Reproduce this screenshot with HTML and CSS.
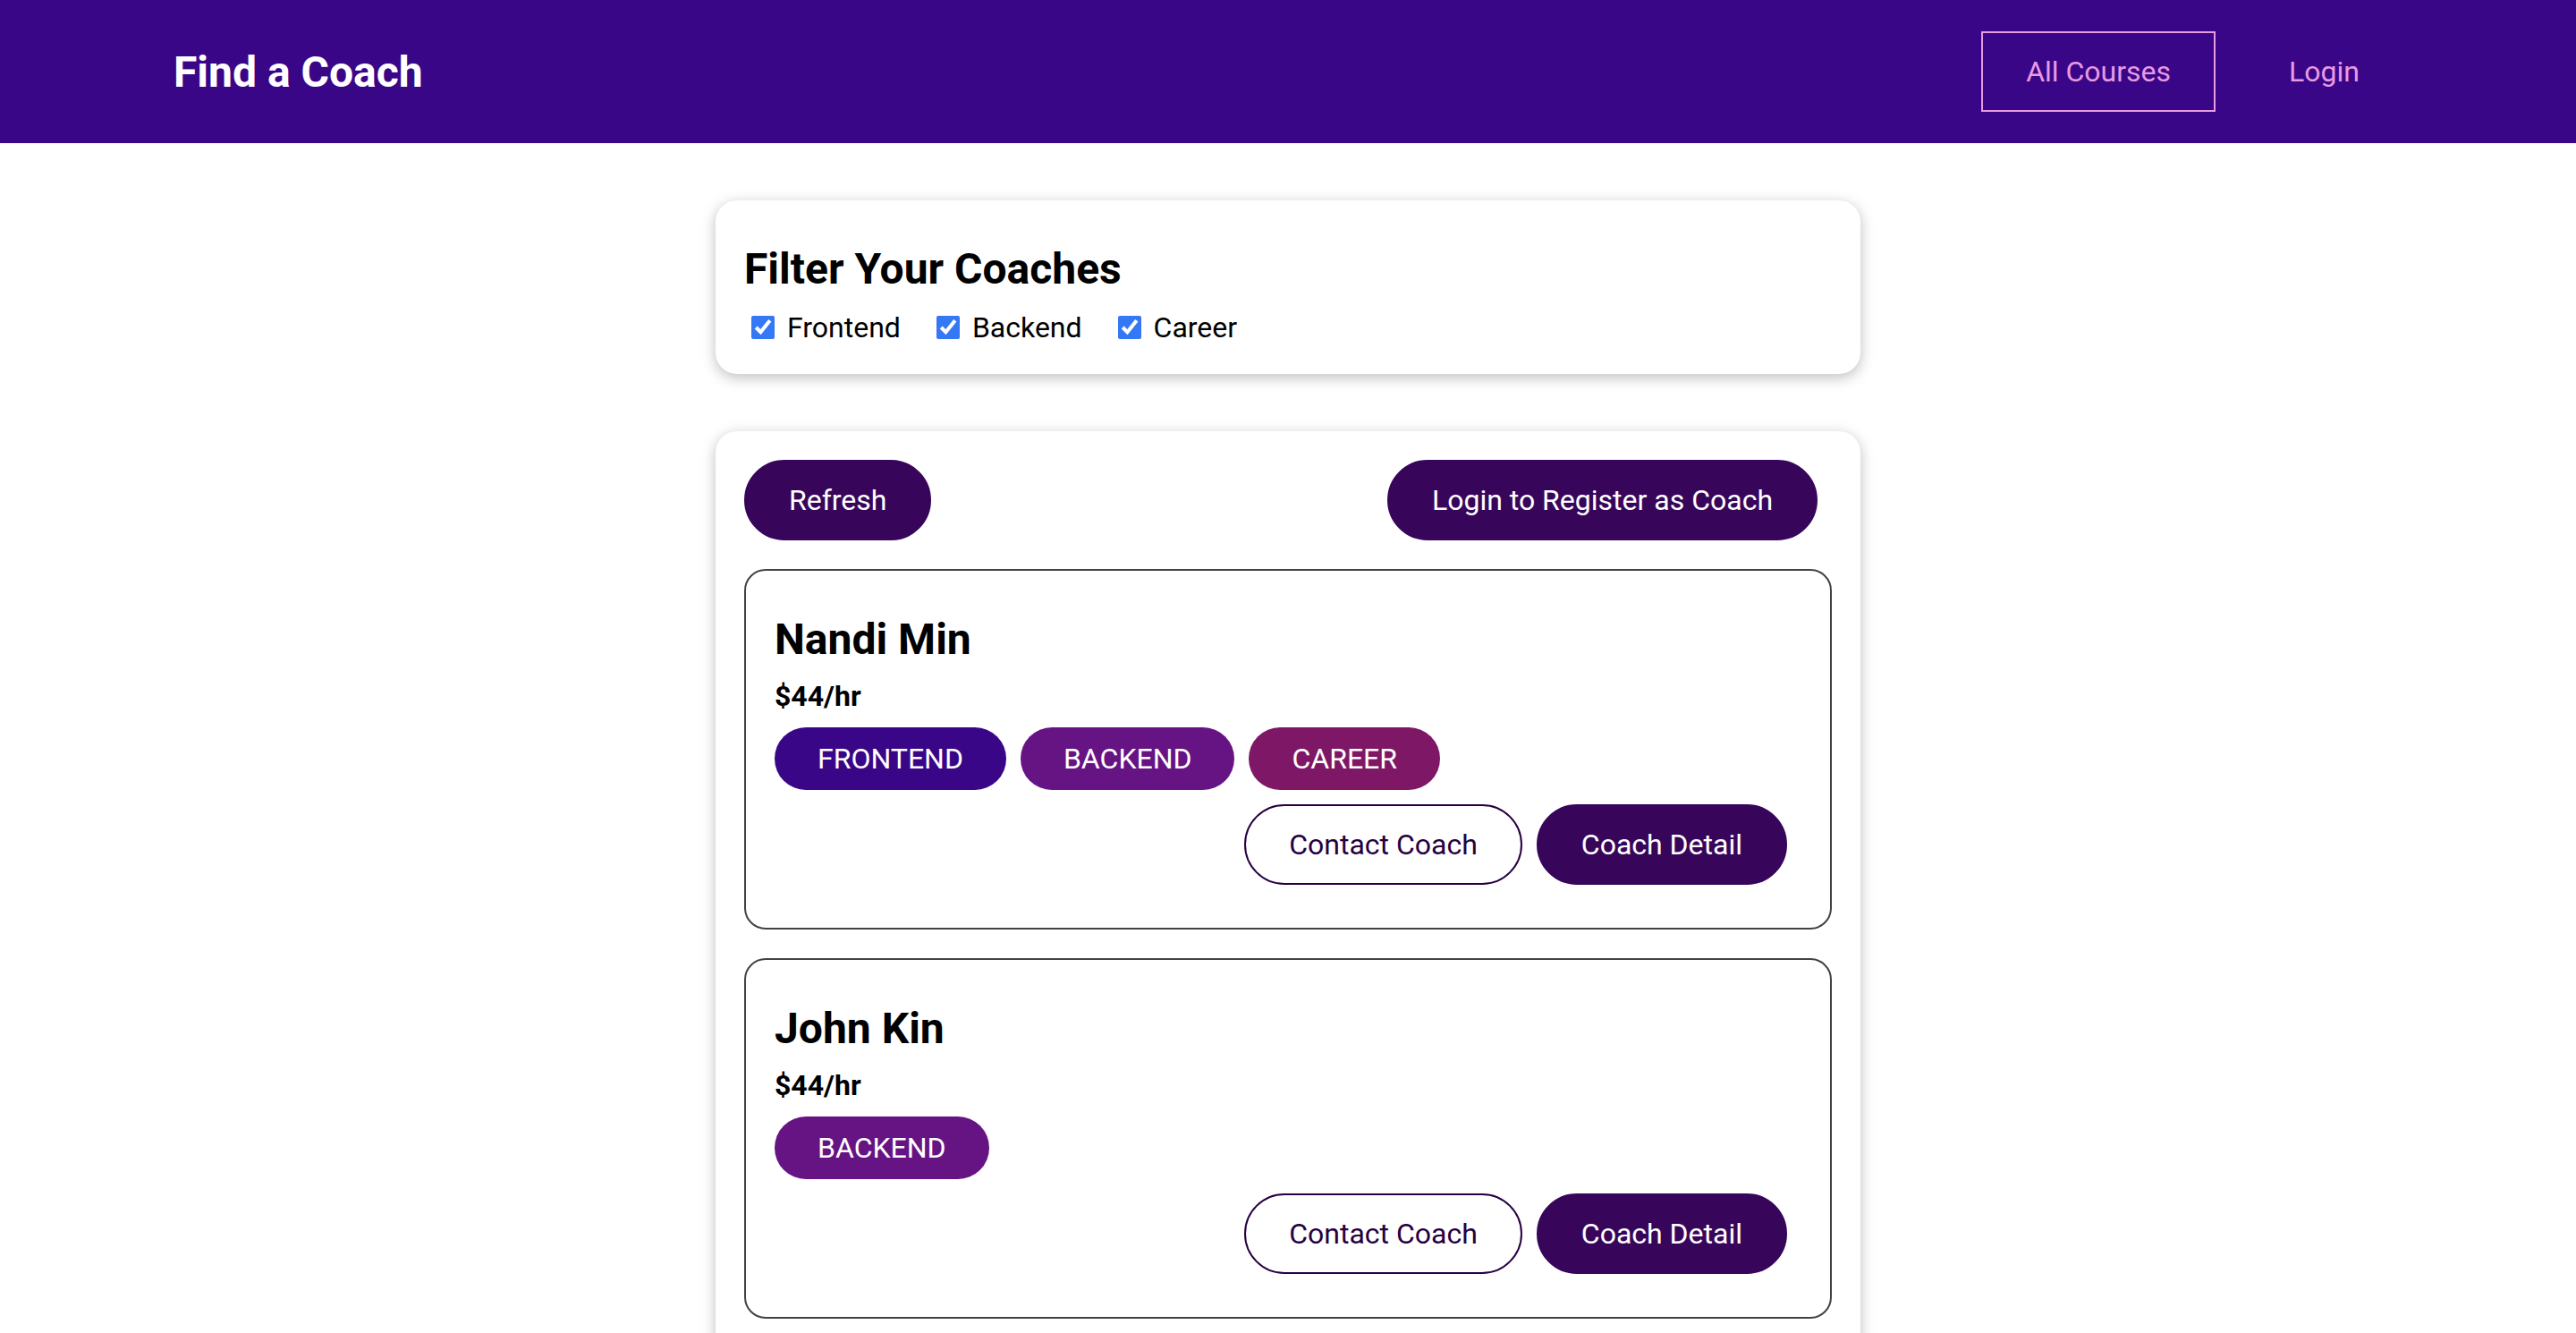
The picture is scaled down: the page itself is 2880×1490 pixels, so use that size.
FILE: index.html
```html
<!DOCTYPE html>
<html lang="en">
<head>
<meta charset="utf-8">
<title>Find a Coach</title>
<link rel="stylesheet" href="styles.css">
</head>
<body>
<header class="site-header">
  <nav class="nav">
    <h1 class="brand"><a href="#">Find a Coach</a></h1>
    <ul class="nav-links">
      <li><a href="#" class="nav-link active">All Courses</a></li>
      <li><a href="#" class="nav-link">Login</a></li>
    </ul>
  </nav>
</header>
<main>
  <section class="card">
    <h2 class="filter-title">Filter Your Coaches</h2>
    <div class="filter-row">
      <span class="filter-option"><input type="checkbox" id="frontend" checked><label for="frontend">Frontend</label></span>
      <span class="filter-option"><input type="checkbox" id="backend" checked><label for="backend">Backend</label></span>
      <span class="filter-option"><input type="checkbox" id="career" checked><label for="career">Career</label></span>
    </div>
  </section>
  <section class="card">
    <div class="controls">
      <button class="btn" type="button">Refresh</button>
      <a href="#" class="btn btn-register">Login to Register as Coach</a>
    </div>
    <ul class="coach-list">
      <li class="coach">
        <h3 class="coach-name">Nandi Min</h3>
        <h4 class="coach-rate">$44/hr</h4>
        <div class="badges">
          <span class="badge badge-frontend">FRONTEND</span>
          <span class="badge badge-backend">BACKEND</span>
          <span class="badge badge-career">CAREER</span>
        </div>
        <div class="actions">
          <a href="#" class="btn btn-outline">Contact Coach</a>
          <a href="#" class="btn">Coach Detail</a>
        </div>
      </li>
      <li class="coach">
        <h3 class="coach-name">John Kin</h3>
        <h4 class="coach-rate">$44/hr</h4>
        <div class="badges">
          <span class="badge badge-backend">BACKEND</span>
        </div>
        <div class="actions">
          <a href="#" class="btn btn-outline">Contact Coach</a>
          <a href="#" class="btn">Coach Detail</a>
        </div>
      </li>
    </ul>
  </section>
</main>
</body>
</html>
```

FILE: styles.css
```css
* {
  box-sizing: border-box;
}

html {
  font-family: Roboto, "Liberation Sans", sans-serif;
}

body {
  margin: 0;
  font-size: 32px;
  color: #000;
  background: #fff;
}

/* Header */
.site-header {
  height: 160px;
  background: #3a0688;
  display: flex;
  justify-content: center;
  align-items: center;
}

.nav {
  width: 90%;
  display: flex;
  justify-content: space-between;
  align-items: center;
}

.brand {
  margin: 0;
  font-size: 48px;
  font-weight: 700;
}

.brand a {
  display: inline-block;
  color: #fff;
  text-decoration: none;
  padding: 24px 48px;
  border: 2px solid transparent;
}

.nav-links {
  list-style: none;
  margin: 0 32px 0 0;
  padding: 0;
  display: flex;
  align-items: center;
}

.nav-links li {
  margin: 0 16px;
}

.nav-link {
  display: inline-block;
  color: #e89ae2;
  text-decoration: none;
  font-size: 32px;
  padding: 24px 48px;
  border: 2px solid transparent;
}

.nav-link.active {
  border-color: #e89ae2;
}

/* Cards */
.card {
  max-width: 1280px;
  margin: 64px auto;
  padding: 32px;
  border-radius: 24px;
  background: #fff;
  box-shadow: 0 4px 16px rgba(0, 0, 0, 0.26);
}

.filter-title {
  margin: 16px 0;
  font-size: 48px;
  font-weight: 700;
}

.filter-row {
  display: flex;
  align-items: center;
  height: 41px;
  padding-top: 2px;
  padding-bottom: 2px;
}

.filter-option {
  display: flex;
  align-items: center;
  margin-right: 32px;
}

.filter-option input {
  width: 26px;
  height: 26px;
  margin: 6px 6px 6px 8px;
  accent-color: #3478f6;
}

.filter-option label {
  margin-left: 8px;
}

/* Buttons */
.btn {
  display: inline-block;
  font: inherit;
  font-size: 32px;
  line-height: normal;
  text-decoration: none;
  padding: 24px 48px;
  background: #37065b;
  border: 2px solid #37065b;
  color: #fff;
  border-radius: 60px;
  cursor: pointer;
  margin-right: 16px;
}

.btn-outline {
  background: transparent;
  border-color: #270041;
  color: #270041;
}

.controls {
  display: flex;
  justify-content: space-between;
}

.controls .btn:first-child {
  margin-right: 0;
}

/* Coach list */
.coach-list {
  list-style: none;
  margin: 0;
  padding: 0;
}

.coach {
  margin: 32px 0;
  border: 2px solid #424242;
  border-radius: 24px;
  padding: 32px;
}

.coach-name {
  margin: 16px 0;
  font-size: 48px;
  font-weight: 700;
}

.coach-rate {
  margin: 16px 0;
  font-size: 32px;
  font-weight: 700;
}

.badges {
  margin: 16px 0;
  display: flex;
}

.badge {
  display: inline-block;
  padding: 16px 48px;
  border-radius: 60px;
  color: #fff;
  margin-right: 16px;
  line-height: normal;
}

.badge-frontend {
  background: #3a0688;
}

.badge-backend {
  background: #661384;
}

.badge-career {
  background: #7e1866;
}

.actions {
  margin: 16px 0;
  display: flex;
  justify-content: flex-end;
}
```
